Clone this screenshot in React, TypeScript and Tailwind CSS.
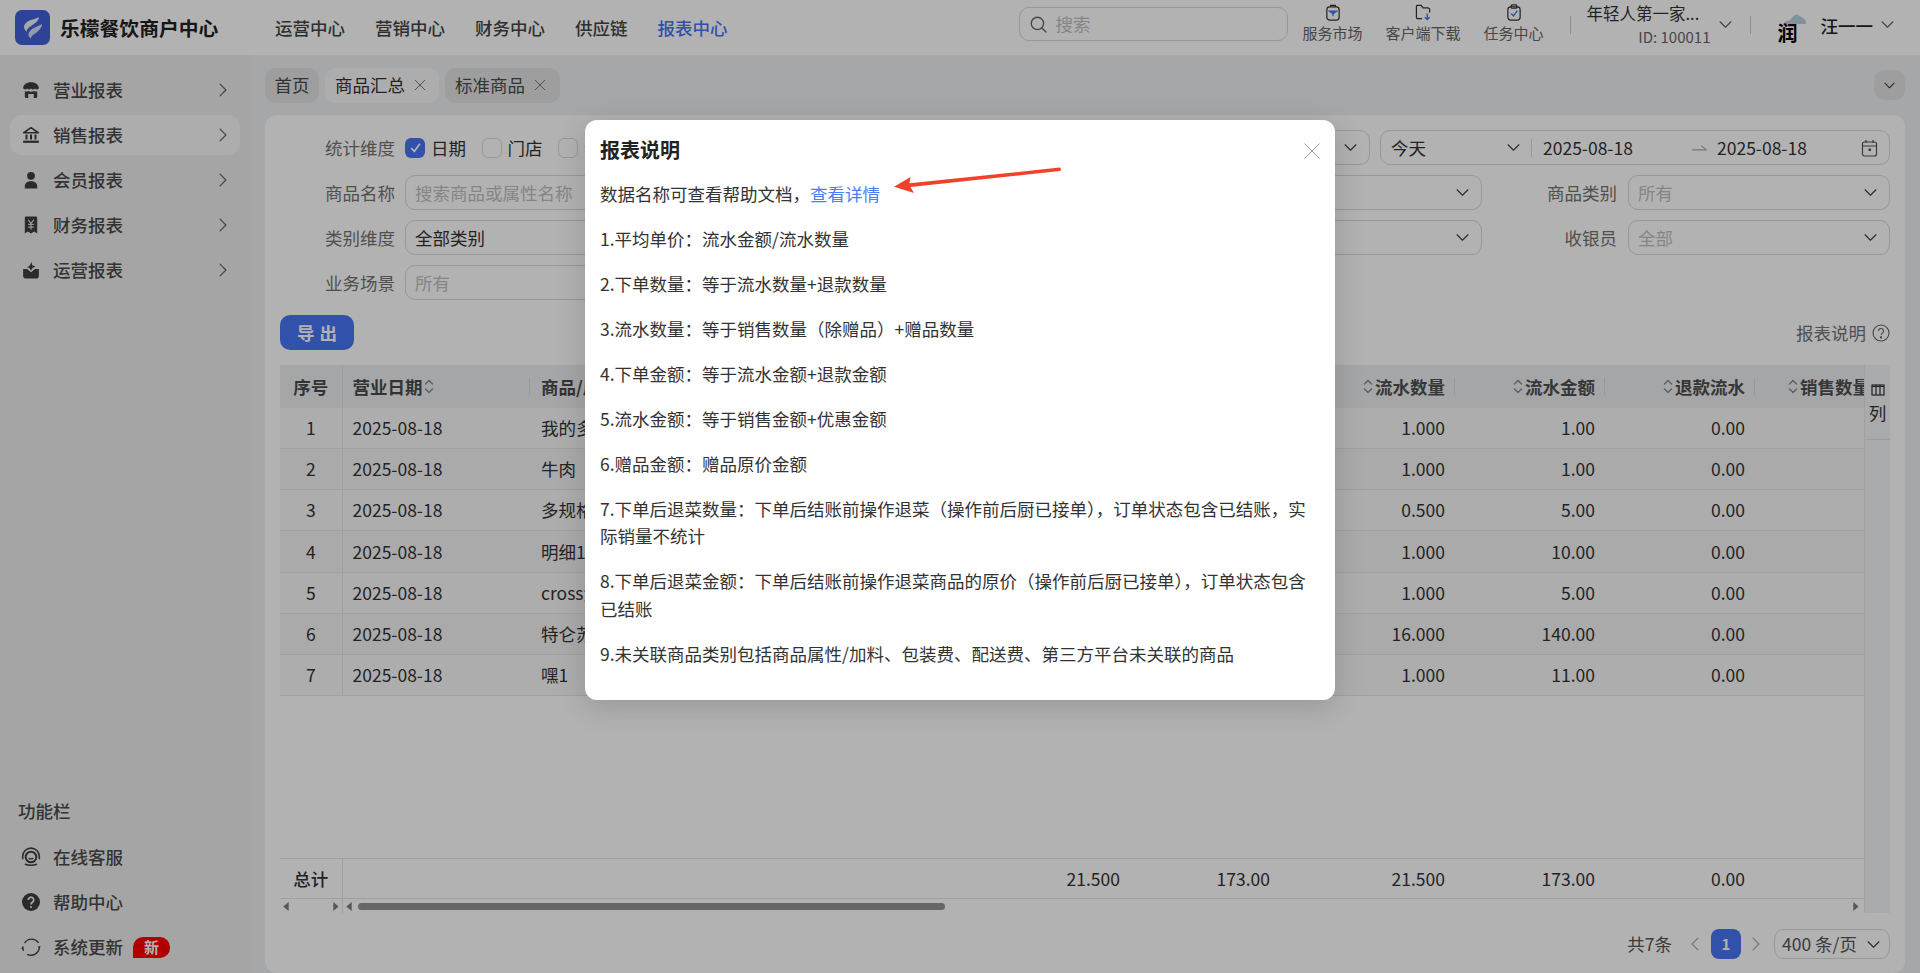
import React from "react";

const Chevron = ({ dir = "down", cls = "w-[13px] h-[13px]", color = "#555" }: { dir?: string; cls?: string; color?: string }) => (
  <svg viewBox="0 0 12 12" className={cls} fill="none" stroke={color} strokeWidth="1.1" strokeLinecap="round" strokeLinejoin="round">
    {dir === "down" && <polyline points="1,3.5 6,8.5 11,3.5" />}
    {dir === "right" && <polyline points="3.5,1 8.5,6 3.5,11" />}
    {dir === "left" && <polyline points="8.5,1 3.5,6 8.5,11" />}
  </svg>
);

const Sort = () => (
  <svg viewBox="0 0 10 16" className="w-[10px] h-[17px] shrink-0" fill="none" stroke="#8c8c8c" strokeWidth="1.5" strokeLinecap="round" strokeLinejoin="round">
    <polyline points="1.5,5.5 5,2 8.5,5.5" />
    <polyline points="1.5,10.5 5,14 8.5,10.5" />
  </svg>
);

const SideIcon = ({ name }: { name: string }) => {
  const c = "w-[18px] h-[18px]";
  if (name === "store")
    return (
      <svg viewBox="0 0 16 16" className={c} fill="#3e3e3e">
        <path d="M1 6.2C1.3 3 4 1 8 1s6.7 2 7 5.2c-.7 1.6-2.6 1.6-3.5.4-.9 1.2-2.6 1.2-3.5 0-.9 1.2-2.6 1.2-3.5 0C3.6 7.8 1.7 7.800 1 6.200z" />
        <path d="M2.500 9.200c1 .3 2 .2 2.800-.3.9.5 1.800.6 2.700.6s1.800-.1 2.700-.6c.8.500 1.800.6 2.800.3V14a1 1 0 0 1-1 1H10.500v-3.500h-5V15H3.500a1 1 0 0 1-1-1z" />
      </svg>
    );
  if (name === "bank")
    return (
      <svg viewBox="0 0 16 16" className={c} fill="none" stroke="#3e3e3e" strokeWidth="1.4">
        <path d="M1.500 6L8 1.500 14.500 6z" strokeLinejoin="round" />
        <path d="M4 7.500V12M8 7.500V12M12 7.500V12" strokeWidth="1.800" />
        <path d="M1 14h14" strokeWidth="2" />
      </svg>
    );
  if (name === "user")
    return (
      <svg viewBox="0 0 16 16" className={c} fill="#3e3e3e">
        <circle cx="8" cy="4.300" r="3.500" />
        <path d="M2.500 15.500v-2.300C2.500 10.500 5 9 8 9s5.500 1.500 5.500 4.200v2.300z" />
      </svg>
    );
  if (name === "receipt")
    return (
      <svg viewBox="0 0 16 16" className={c}>
        <path d="M2.500 1.500a1 1 0 0 1 1-1h9a1 1 0 0 1 1 1v14l-2.700-1.800L8 15.500l-2.800-1.800-2.700 1.800z" fill="#3e3e3e" />
        <path d="M5.500 3.500L8 6.500l2.500-3M8 6.500V12M5.500 7.500h5M5.500 9.800h5" stroke="#d8d8d8" strokeWidth="1.100" fill="none" />
      </svg>
    );
  if (name === "box")
    return (
      <svg viewBox="0 0 16 16" className={c} fill="#3e3e3e">
        <path d="M1 7h3.500L8 10l3.500-3H15v6a2.500 2.500 0 0 1-2.500 2.500h-9A2.500 2.500 0 0 1 1 13z" />
        <path d="M8.500 .8l.6 3 2.900 1-2.700 1.400L8 8.500 6.600 6.200 4.500 5.500l2.300-1.200z" />
      </svg>
    );
  if (name === "service")
    return (
      <svg viewBox="0 0 18 18" className="w-[20px] h-[20px]" fill="none" stroke="#3e3e3e">
        <path d="M1.500 11V8.500A7.500 7.500 0 0 1 16.500 8.500V11" strokeWidth="1.400" />
        <circle cx="9" cy="9" r="4.800" strokeWidth="1.800" />
        <path d="M7 10c.5 1 3.500 1 4 0" strokeWidth="1.100" />
        <path d="M4 15.500c2 1.200 7.500 1.200 10 0" strokeWidth="1.400" strokeLinecap="round" />
      </svg>
    );
  if (name === "help")
    return (
      <svg viewBox="0 0 18 18" className="w-[18px] h-[18px]">
        <circle cx="9" cy="9" r="9" fill="#3e3e3e" />
        <path d="M6.300 7a2.700 2.700 0 1 1 4.200 2.200c-1 .7-1.500 1-1.500 2.200" fill="none" stroke="#ededed" strokeWidth="1.800" />
        <circle cx="9" cy="14" r="1.100" fill="#ededed" />
      </svg>
    );
  return (
    <svg viewBox="0 0 18 18" className="w-[20px] h-[20px]" fill="none" stroke="#3e3e3e" strokeWidth="1.300" strokeLinecap="round">
      <path d="M3.500 5A7.500 7.500 0 0 1 15.500 4.800" />
      <path d="M16.500 9A7.500 7.500 0 0 1 6 15.800" />
      <path d="M1.500 9a7.500 7.500 0 0 0 .5 3" />
      <path d="M15 8.500l1.500 1.500 1.500-1.500" fill="#3e3e3e" stroke="none" />
      <path d="M0 10.500l1.500-1.500 1.500 1.500" fill="#3e3e3e" stroke="none" />
    </svg>
  );
};

const menu = [
  ["store", "营业报表"],
  ["bank", "销售报表"],
  ["user", "会员报表"],
  ["receipt", "财务报表"],
  ["box", "运营报表"],
];

const rows = [
  ["1", "我的多规格商品", "1.000", "1.00"],
  ["2", "牛肉", "1.000", "1.00"],
  ["3", "多规格商品", "0.500", "5.00"],
  ["4", "明细1", "1.000", "10.00"],
  ["5", "cross测试", "1.000", "5.00"],
  ["6", "特仑苏", "16.000", "140.00"],
  ["7", "嘿1", "1.000", "11.00"],
];

const grid = "grid grid-cols-[62.5px_187.5px_450px_150px_150px_175px_150px_150px_125px] w-[1600px]";

const Num = ({ v }: { v?: string }) => <div className="flex items-center justify-end pr-[10px]">{v}</div>;

const HeadRight = ({ t }: { t: string }) => (
  <div className="relative flex items-center justify-end gap-[2px] pr-[10px]">
    <Sort />
    <span>{t}</span>
    <span className="absolute right-0 top-[13px] h-[17px] w-px bg-[#d9dbde]" />
  </div>
);

const Field = ({ cls, text, muted, chevron = true }: { cls: string; text?: string; muted?: boolean; chevron?: boolean }) => (
  <div className={`${cls} h-[35px] shrink-0 flex items-center justify-between rounded-[10px] border border-[#d9d9d9] bg-white pl-[9px] pr-[12px]`}>
    <span className={muted ? "text-[#bfbfbf]" : "text-[#333]"}>{text}</span>
    {chevron && <Chevron color="#444" />}
  </div>
);

const Label = ({ t }: { t: string }) => <span className="w-[125px] shrink-0 pr-[10px] text-right text-[#737373]">{t}</span>;

const Check = ({ on, t }: { on?: boolean; t: string }) => (
  <div className="flex items-center gap-[6px] mr-[15.5px] whitespace-nowrap">
    {on ? (
      <span className="w-[20px] h-[20px] rounded-[6px] bg-[#4875f5] flex items-center justify-center">
        <svg viewBox="0 0 12 12" className="w-[13px] h-[13px]" fill="none" stroke="#fff" strokeWidth="1.600"><polyline points="2,6.500 5,9.500 10,2.500" /></svg>
      </span>
    ) : (
      <span className="w-[20px] h-[20px] rounded-[6px] border border-[#d9d9d9] bg-white" />
    )}
    <span className="text-[#333]">{t}</span>
  </div>
);

const paras = [
  "1.平均单价：流水金额/流水数量",
  "2.下单数量：等于流水数量+退款数量",
  "3.流水数量：等于销售数量（除赠品）+赠品数量",
  "4.下单金额：等于流水金额+退款金额",
  "5.流水金额：等于销售金额+优惠金额",
  "6.赠品金额：赠品原价金额",
  "7.下单后退菜数量：下单后结账前操作退菜（操作前后厨已接单），订单状态包含已结账，实际销量不统计",
  "8.下单后退菜金额：下单后结账前操作退菜商品的原价（操作前后厨已接单），订单状态包含已结账",
  "9.未关联商品类别包括商品属性/加料、包装费、配送费、第三方平台未关联的商品",
];

const Triangle = ({ left }: { left?: boolean }) => (
  <svg viewBox="0 0 6 10" className="w-[6px] h-[9px]" fill="#7f7f7f"><path d={left ? "M6 0v10L0 5z" : "M0 0v10l6-5z"} /></svg>
);

export default function App() {
  return (
    <div className="relative w-[1920px] h-[973px] overflow-hidden flex flex-col bg-[#eef0f2] text-[17.5px] leading-[27.5px] text-[#333] font-['Noto_Sans_CJK_SC','Noto_Sans',sans-serif]">
      {/* header */}
      <header className="h-[55px] shrink-0 bg-white flex items-center pl-[15px] pr-[26px]">
        <svg viewBox="0 0 35 35" className="w-[35px] h-[35px] shrink-0">
          <rect width="35" height="35" rx="7" fill="#3f60d8" />
          <path d="M24 7C24 11 20 13 16 16C13 18 11 20 12 22C8 19 8 15 12 12C16 9 21 9 24 7z" fill="#eef1fb" />
          <path d="M27 14C27 18 24 20 21 23C18 25 16 26 16 28.500C12 26 13 22 17 19C20 17 24 16 27 14z" fill="#d5ddf6" />
        </svg>
        <span className="ml-[10px] w-[160px] text-[19.8px] font-semibold text-[#222] whitespace-nowrap">乐檬餐饮商户中心</span>
        <nav className="ml-[55px] flex gap-[30px] font-medium text-[#444]">
          <span>运营中心</span>
          <span>营销中心</span>
          <span>财务中心</span>
          <span>供应链</span>
          <span className="text-[#4875f5]">报表中心</span>
        </nav>
        <div className="ml-auto flex items-center h-full">
          <div className="mb-[7px] w-[269px] h-[34px] flex items-center gap-[9px] rounded-[10px] border border-[#d9d9d9] pl-[10px] text-[#bfbfbf]">
            <svg viewBox="0 0 16 16" className="w-[17px] h-[17px]" fill="none" stroke="#666" strokeWidth="1.300" strokeLinecap="round"><circle cx="7" cy="7" r="5.800" /><path d="M11.200 11.200L15 15" /></svg>
            <span>搜索</span>
          </div>
          <div className="ml-[15px] h-full flex flex-col items-center pt-[4px] w-[60px] text-[15px] leading-[20px] text-[#666] whitespace-nowrap">
            <svg viewBox="0 0 16 18" className="w-[16px] h-[17px]" fill="none" stroke="#333" strokeWidth="1.300">
              <path d="M5.500 3V1.500h5V3" />
              <rect x="1.500" y="3" width="13" height="14" rx="3" />
              <path d="M2 7h12L8 11z" fill="#4875f5" stroke="none" />
              <path d="M8 10v3" stroke="#4875f5" />
            </svg>
            <span className="mt-[2px]">服务市场</span>
          </div>
          <div className="ml-[23px] h-full flex flex-col items-center pt-[4px] w-[75px] text-[15px] leading-[20px] text-[#666] whitespace-nowrap">
            <svg viewBox="0 0 18 18" className="w-[17px] h-[17px]" fill="none" stroke="#333" strokeWidth="1.300">
              <path d="M7.500 15.500H3a1.500 1.500 0 0 1-1.500-1.500V2.500A1 1 0 0 1 2.500 1.500h4L8.500 4h5A2 2 0 0 1 15.500 6v3" />
              <path d="M13 10v6.500M10.500 14l2.500 2.500 2.500-2.500" stroke="#4875f5" strokeWidth="1.500" />
            </svg>
            <span className="mt-[2px]">客户端下载</span>
          </div>
          <div className="ml-[23px] h-full flex flex-col items-center pt-[4px] w-[60px] text-[15px] leading-[20px] text-[#666] whitespace-nowrap">
            <svg viewBox="0 0 16 18" className="w-[16px] h-[17px]" fill="none" stroke="#333" strokeWidth="1.300">
              <rect x="5" y="1" width="6" height="3.500" rx="1" />
              <rect x="1.500" y="3" width="13" height="14" rx="3" />
              <path d="M5 10l2.500 2.500L11.500 7" stroke="#4875f5" strokeWidth="1.500" />
            </svg>
            <span className="mt-[2px]">任务中心</span>
          </div>
          <span className="ml-[26px] mb-[5px] w-px h-[18px] bg-[#c9c9c9]" />
          <div className="ml-[16px] w-[124px] self-start flex flex-col">
            <span className="text-[16.5px] leading-[26px] text-[#333] whitespace-nowrap">年轻人第一家...</span>
            <span className="text-[15px] leading-[22px] text-[#666] text-right whitespace-nowrap">ID: 100011</span>
          </div>
          <span className="ml-[8px] mb-[6px]"><Chevron color="#666" /></span>
          <span className="ml-[18px] mb-[5px] w-px h-[18px] bg-[#c9c9c9]" />
          <div className="relative ml-[27px] w-[30px] h-[30px] overflow-hidden">
            <svg viewBox="0 0 30 12" className="absolute left-0 top-0 w-[30px] h-[12px]"><path d="M5 11c3-4 5-2 7-4 3-3 4-6 8-5 1 2 4 1 5 3 2 1 3 3 3 6z" fill="#bcd0de" /></svg>
            <span className="absolute left-0 top-[9px] text-[20px] leading-[21px] font-bold text-black">润</span>
          </div>
          <span className="ml-[13px] mb-[3px] font-medium text-[#222] whitespace-nowrap">汪一一</span>
          <span className="ml-[8px] mb-[6px]"><Chevron color="#666" /></span>
        </div>
      </header>

      <div className="flex-1 flex min-h-0">
        {/* sidebar */}
        <aside className="w-[250px] shrink-0 bg-[#ededed] flex flex-col justify-between pt-[15px] pb-[6px] px-[10px]">
          <div className="flex flex-col gap-[5px]">
            {menu.map(([ic, t], i) => (
              <div key={t} className={`h-[40px] rounded-[12px] flex items-center pl-[12px] pr-[10px] ${i === 1 ? "bg-[#f8f8f8]" : ""}`}>
                <span className="w-[18px] flex justify-center shrink-0"><SideIcon name={ic} /></span>
                <span className="ml-[13px] flex-1 font-medium text-[#4a4a4a]">{t}</span>
                <Chevron dir="right" cls="w-[14px] h-[14px]" color="#666" />
              </div>
            ))}
          </div>
          <div className="flex flex-col">
            <span className="pl-[8px] h-[28px] flex items-center font-medium text-[#4a4a4a] mb-[12px]">功能栏</span>
            <div className="flex flex-col gap-[5px]">
              {[
                ["service", "在线客服"],
                ["help", "帮助中心"],
                ["sync", "系统更新"],
              ].map(([ic, t]) => (
                <div key={t} className="h-[40px] flex items-center pl-[11px]">
                  <span className="w-[20px] flex justify-center shrink-0"><SideIcon name={ic} /></span>
                  <span className="ml-[12px] font-medium text-[#4a4a4a]">{t}</span>
                  {t === "系统更新" && (
                    <span className="ml-[10px] w-[37px] h-[21px] flex items-center justify-center rounded-[10px] rounded-bl-none bg-[#ff0000] text-[15px] font-bold text-white">新</span>
                  )}
                </div>
              ))}
            </div>
          </div>
        </aside>

        {/* content */}
        <main className="flex-1 min-w-0 flex flex-col px-[15px]">
          <div className="h-[60px] shrink-0 flex items-center">
            <span className="w-[54px] h-[35px] flex items-center justify-center rounded-[10px] bg-[#e3e3e3] text-[#4a4a4a]">首页</span>
            <span className="ml-[6px] w-[114px] h-[35px] flex items-center pl-[10px] gap-[9px] rounded-[10px] bg-[#f8f8f8] text-[#333]">
              商品汇总
              <svg viewBox="0 0 12 12" className="w-[12px] h-[12px]" stroke="#777" strokeWidth="1"><path d="M1 1l10 10M11 1L1 11" /></svg>
            </span>
            <span className="ml-[6px] w-[115px] h-[35px] flex items-center pl-[10px] gap-[9px] rounded-[10px] bg-[#e3e3e3] text-[#4a4a4a]">
              标准商品
              <svg viewBox="0 0 12 12" className="w-[12px] h-[12px]" stroke="#777" strokeWidth="1"><path d="M1 1l10 10M11 1L1 11" /></svg>
            </span>
            <span className="ml-auto w-[31px] h-[30px] rounded-[10px] bg-[#e3e3e3] flex items-center justify-center"><Chevron color="#333" cls="w-[11px] h-[11px]" /></span>
          </div>

          <section className="flex-1 min-h-0 flex flex-col rounded-[12px] bg-white pt-[15px] px-[15px]">
            {/* filters */}
            <div className="flex flex-col gap-[10px]">
              <div className="h-[35px] flex items-center">
                <Label t="统计维度" />
                <Check on t="日期" />
                <Check t="门店" />
                <Check t="订单" />
                <div className="ml-auto flex items-center gap-[10px]">
                  <Field cls="w-[300px]" />
                  <div className="w-[510px] h-[35px] flex items-center rounded-[10px] border border-[#d9d9d9] pl-[10px] text-[#333]">
                    <span className="w-[116px]">今天</span>
                    <Chevron color="#444" />
                    <span className="ml-[11px] w-px h-[18px] bg-[#d9d9d9]" />
                    <span className="ml-[11px] w-[149px]">2025-08-18</span>
                    <svg viewBox="0 0 16 8" className="w-[15px] h-[8px]" fill="none" stroke="#aaa" strokeWidth="1.100"><path d="M0 6h15L10 1.500" /></svg>
                    <span className="ml-[10px] w-[144px]">2025-08-18</span>
                    <svg viewBox="0 0 16 18" className="w-[17px] h-[18px]" fill="none" stroke="#555" strokeWidth="1.200">
                      <rect x="1" y="3" width="14" height="14" rx="2" />
                      <path d="M1 7h14M4.500 1v3M11.500 1v3" />
                      <rect x="7" y="9.500" width="2.500" height="2.500" fill="#555" stroke="none" />
                    </svg>
                  </div>
                </div>
              </div>
              <div className="h-[35px] flex items-center">
                <Label t="商品名称" />
                <Field cls="w-[490px]" text="搜索商品或属性名称" muted chevron={false} />
                <Field cls="ml-[115px] w-[472px]" />
                <span className="w-[135px] shrink-0 text-right text-[#737373]">商品类别</span>
                <Field cls="ml-[11px] w-[262px]" text="所有" muted />
              </div>
              <div className="h-[35px] flex items-center">
                <Label t="类别维度" />
                <Field cls="w-[490px]" text="全部类别" />
                <Field cls="ml-[115px] w-[472px]" />
                <span className="w-[135px] shrink-0 text-right text-[#737373]">收银员</span>
                <Field cls="ml-[11px] w-[262px]" text="全部" muted />
              </div>
              <div className="h-[35px] flex items-center">
                <Label t="业务场景" />
                <Field cls="w-[490px]" text="所有" muted chevron={false} />
              </div>
            </div>

            <div className="mt-[15px] h-[35px] shrink-0 flex items-center justify-between">
              <button className="w-[74px] h-[35px] pl-[5px] rounded-[10px] bg-[#4875f5] text-white font-bold tracking-[5px]">导出</button>
              <span className="flex items-center gap-[6px] text-[#737373]">
                报表说明
                <svg viewBox="0 0 18 18" className="w-[18px] h-[18px]" fill="none" stroke="#666" strokeWidth="1.100">
                  <circle cx="9" cy="9" r="8" />
                  <path d="M6.500 7a2.500 2.500 0 1 1 3.800 2.100c-.9.600-1.300 1-1.300 2" />
                  <circle cx="9" cy="13.500" r=".6" fill="#666" />
                </svg>
              </span>
            </div>

            {/* table */}
            <div className="mt-[15px] h-[548px] shrink-0 flex">
              <div className="flex-1 min-w-0 flex flex-col overflow-hidden border-r border-[#e3e5e8]">
                <div className={`${grid} h-[42.5px] shrink-0 bg-[#eceef1] font-bold text-[#4f4f4f]`}>
                  <div className="flex items-center justify-center border-r border-[#dfe1e4] text-[#4a4a4a]">序号</div>
                  <div className="relative flex items-center pl-[10px] gap-[1px] text-[#4a4a4a]">
                    营业日期<Sort />
                    <span className="absolute right-0 top-[13px] h-[17px] w-px bg-[#d9dbde]" />
                  </div>
                  <div className="flex items-center pl-[11px] text-[#4a4a4a]">商品/属性</div>
                  <div />
                  <div />
                  <HeadRight t="流水数量" />
                  <HeadRight t="流水金额" />
                  <HeadRight t="退款流水" />
                  <HeadRight t="销售数量" />
                </div>
                {rows.map((r, i) => (
                  <div key={r[0]} className={`${grid} h-[41.25px] shrink-0 border-b border-[#e6e6e6] ${i % 2 ? "bg-[#f4f4f4]" : "bg-[#f8f8f8]"}`}>
                    <div className="flex items-center justify-center border-r border-[#e6e6e6]">{r[0]}</div>
                    <div className="flex items-center pl-[10px]">2025-08-18</div>
                    <div className="flex items-center pl-[11px]">{r[1]}</div>
                    <div />
                    <div />
                    <Num v={r[2]} />
                    <Num v={r[3]} />
                    <Num v="0.00" />
                    <Num />
                  </div>
                ))}
                <div className="flex-1" />
                <div className={`${grid} h-[41px] shrink-0 border-y border-[#e6e6e6]`}>
                  <div className="flex items-center justify-center border-r border-[#e6e6e6] font-medium text-[#333]">总计</div>
                  <div />
                  <div />
                  <Num v="21.500" />
                  <Num v="173.00" />
                  <Num v="21.500" />
                  <Num v="173.00" />
                  <Num v="0.00" />
                  <Num />
                </div>
                <div className="h-[14px] shrink-0 flex items-center">
                  <div className="w-[62.5px] h-full flex items-center justify-between px-[3px] border-r border-[#e6e6e6]">
                    <Triangle left />
                    <Triangle />
                  </div>
                  <span className="ml-[3px]"><Triangle left /></span>
                  <span className="ml-[6px] w-[587px] h-[7px] rounded-full bg-[#929292]" />
                  <span className="ml-auto mr-[5px]"><Triangle /></span>
                </div>
              </div>
              <div className="w-[25px] shrink-0 bg-[#f3f4f6] flex flex-col">
                <div className="h-[75px] border-b border-[#dfe1e4] flex flex-col items-center pt-[18px]">
                  <svg viewBox="0 0 14 14" className="w-[14px] h-[14px]" fill="none" stroke="#333" strokeWidth="1.200">
                    <rect x="1" y="2" width="12" height="10" />
                    <path d="M5 2v10M9 2v10M1 3.500h12" />
                  </svg>
                  <span className="mt-[2px] text-[#333]">列</span>
                </div>
              </div>
            </div>

            {/* pagination */}
            <div className="mt-[16px] h-[30px] shrink-0 flex items-center justify-end">
              <span className="text-[#555]">共7条</span>
              <span className="ml-[16px]"><Chevron dir="left" color="#aaa" cls="w-[14px] h-[14px]" /></span>
              <span className="ml-[9px] w-[30px] h-[30px] rounded-[8px] bg-[#4875f5] text-white font-bold text-[15px] flex items-center justify-center">1</span>
              <span className="ml-[8px]"><Chevron dir="right" color="#aaa" cls="w-[14px] h-[14px]" /></span>
              <div className="ml-[11px] w-[116px] h-[30px] rounded-[10px] border border-[#d9d9d9] flex items-center pl-[7px] gap-[10px] text-[#555] whitespace-nowrap">
                <span>400 条/页</span>
                <Chevron color="#444" />
              </div>
            </div>
          </section>
        </main>
      </div>

      {/* dim layer + modal */}
      <div className="absolute inset-0 bg-black/30 flex justify-center pt-[120px]">
        <div className="relative w-[750px] h-[580px] rounded-[12px] bg-white px-[15px] pt-[16px] shadow-[0_6px_30px_rgba(0,0,0,0.16)] text-[#333]">
          <h2 className="text-[20px] leading-[27.5px] font-semibold text-[#222]">报表说明</h2>
          <svg viewBox="0 0 16 16" className="absolute right-[15px] top-[23px] w-[16px] h-[16px]" fill="none" stroke="#999" strokeWidth="1"><path d="M.5 .5l15 15M15.500 .5l-15 15" /></svg>
          <p className="mt-[16px] mb-[17.5px]">
            数据名称可查看帮助文档，<span className="text-[#4a7dff]">查看详情</span>
          </p>
          {paras.map((p) => (
            <p key={p} className="mb-[17.5px]">{p}</p>
          ))}
          <svg viewBox="0 0 170 26" className="absolute left-[308px] top-[47px] w-[170px] h-[26px]" fill="#f0412a">
            <path d="M1 19.700L17.500 10l-1 6.300L166.500 .6c1.500-.2 2 3 .3 3.400L17.500 20l3.500 6z" />
          </svg>
        </div>
      </div>
    </div>
  );
}
